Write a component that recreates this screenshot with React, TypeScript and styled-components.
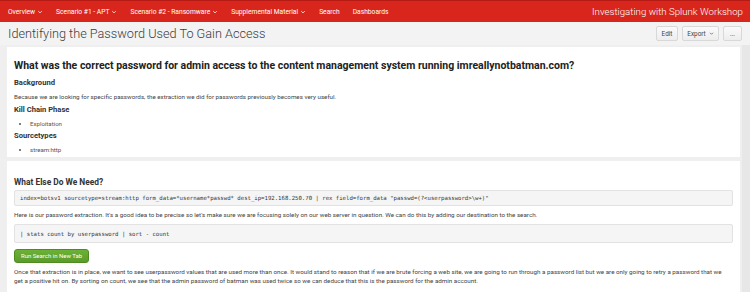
import styled, { createGlobalStyle } from 'styled-components';

const Global = createGlobalStyle`
  body {
    margin: 0;
    background: #eeeeee;
    font-family: Roboto, "Liberation Sans", sans-serif;
    color: #333;
  }
`;

const Page = styled.div`
  width: 750px;
  height: 292px;
  overflow: hidden;
  display: flex;
  flex-direction: column;
  background: #efefef;
`;

const TopBar = styled.div`
  height: 22px;
  flex-shrink: 0;
  background: #d8261c;
  border-top: 1px solid #b51a14;
  box-sizing: border-box;
  display: flex;
  align-items: center;
  padding: 0 7px 0 8px;
`;

const Nav = styled.nav`
  display: flex;
  align-items: center;
  gap: 13px;
  flex: 1;
`;

const NavItem = styled.span`
  color: #fff;
  font-size: 6.7px;
  display: flex;
  align-items: center;
  gap: 2px;
  white-space: nowrap;
`;

const AppTitle = styled.div`
  color: #fff;
  font-size: 9.7px;
  font-weight: 300;
  white-space: nowrap;
`;

const Header = styled.div`
  height: 23px;
  flex-shrink: 0;
  display: flex;
  align-items: center;
  justify-content: space-between;
  padding: 0 8px;
  background: #f3f3f3;
`;

const PageTitle = styled.h1`
  margin: 0;
  font-size: 12.7px;
  font-weight: 300;
  color: #3c3c3c;
  white-space: nowrap;
`;

const Actions = styled.div`
  display: flex;
  gap: 4px;
`;

const ActionButton = styled.button<{ $w: number }>`
  width: ${(p) => p.$w}px;
  height: 15px;
  padding: 0;
  border: 1px solid #d8d8d8;
  border-radius: 2px;
  background: linear-gradient(#fafafa, #ededed);
  color: #444;
  font-family: inherit;
  font-size: 6.4px;
  display: flex;
  align-items: center;
  justify-content: center;
  gap: 3px;
`;

const Body = styled.div`
  flex: 1;
  display: flex;
  min-height: 0;
`;

const Column = styled.div`
  flex: 1;
  display: flex;
  flex-direction: column;
  gap: 4px;
  padding: 2px 2px 0 7px;
`;

const Track = styled.div`
  width: 8px;
  flex-shrink: 0;
  background: #e7e7e7;
`;

const Panel = styled.section<{ $top: number; $bottom: number }>`
  background: #fff;
  padding: ${(p) => p.$top}px 7px ${(p) => p.$bottom}px 7px;
`;

const Question = styled.h2`
  margin: 5px 0 6px;
  font-size: 10.5px;
  line-height: 12px;
  font-weight: 700;
  color: #222;
  white-space: nowrap;
`;

const SubHead = styled.h3<{ $size?: number }>`
  margin: 0 0 3px;
  font-size: ${(p) => p.$size ?? 7.6}px;
  line-height: 10px;
  font-weight: 700;
  color: #333;
  white-space: nowrap;
`;

const Text = styled.p<{ $lh?: number; $mb?: number }>`
  margin: 0 0 ${(p) => p.$mb ?? 2}px;
  font-size: 6.25px;
  line-height: ${(p) => p.$lh ?? 12}px;
  color: #444;
  white-space: nowrap;
`;

const List = styled.ul`
  margin: 0 0 2px;
  padding-left: 16px;
  font-size: 6.1px;
  color: #555;
  li {
    line-height: 11px;
  }
`;

const Code = styled.pre<{ $h: number }>`
  margin: 0;
  height: ${(p) => p.$h}px;
  box-sizing: border-box;
  padding: 0 5px;
  display: flex;
  align-items: center;
  background: #f5f5f5;
  border: 1px solid #e2e2e2;
  border-radius: 2px;
  font-family: "DejaVu Sans Mono", "Liberation Mono", monospace;
  font-size: 5.65px;
  color: #333;
  white-space: nowrap;
`;

const RunButton = styled.button`
  height: 14px;
  padding: 0 6px;
  margin: 4px 0 5px;
  border: 1px solid #4f8b22;
  border-radius: 3px;
  background: linear-gradient(#6cb236, #5a9c2a);
  color: #fff;
  font-family: inherit;
  font-size: 6px;
`;

const Chevron = ({ size = 6 }: { size?: number }) => (
  <svg width={size} height={size} viewBox="0 0 10 10">
    <path d="M2 3.5 L5 6.5 L8 3.5" fill="none" stroke="currentColor" strokeWidth="1.3" />
  </svg>
);

const navItems = [
  { label: 'Overview', menu: true },
  { label: 'Scenario #1 - APT', menu: true },
  { label: 'Scenario #2 - Ransomware', menu: true },
  { label: 'Supplemental Material', menu: true },
  { label: 'Search', menu: false },
  { label: 'Dashboards', menu: false },
];

export default function App() {
  return (
    <Page>
      <Global />
      <TopBar>
        <Nav>
          {navItems.map((n) => (
            <NavItem key={n.label}>
              {n.label}
              {n.menu && <Chevron size={6} />}
            </NavItem>
          ))}
        </Nav>
        <AppTitle>Investigating with Splunk Workshop</AppTitle>
      </TopBar>

      <Header>
        <PageTitle>Identifying the Password Used To Gain Access</PageTitle>
        <Actions>
          <ActionButton $w={22}>Edit</ActionButton>
          <ActionButton $w={37}>
            Export <Chevron size={5} />
          </ActionButton>
          <ActionButton $w={19}>...</ActionButton>
        </Actions>
      </Header>

      <Body>
        <Column>
          <Panel $top={8} $bottom={0}>
            <Question>
              What was the correct password for admin access to the content management system running imreallynotbatman.com?
            </Question>
            <SubHead>Background</SubHead>
            <Text>
              Because we are looking for specific passwords, the extraction we did for passwords previously becomes very useful.
            </Text>
            <SubHead>Kill Chain Phase</SubHead>
            <List>
              <li>Exploitation</li>
            </List>
            <SubHead>Sourcetypes</SubHead>
            <List>
              <li>stream:http</li>
            </List>
          </Panel>

          <Panel $top={16} $bottom={5}>
            <SubHead $size={8.4}>What Else Do We Need?</SubHead>
            <Code $h={16}>
              index=botsv1 sourcetype=stream:http form_data=*username*passwd* dest_ip=192.168.250.70 | rex field=form_data "passwd=(?&lt;userpassword&gt;\w+)"
            </Code>
            <Text $lh={18} $mb={0}>
              Here is our password extraction. It's a good idea to be precise so let's make sure we are focusing solely on our web server in question. We can do this by adding our destination to the search.
            </Text>
            <Code $h={19}>| stats count by userpassword | sort - count</Code>
            <RunButton>Run Search in New Tab</RunButton>
            <Text $lh={9.5} $mb={1}>
              Once that extraction is in place, we want to see userpassword values that are used more than once. It would stand to reason that if we are brute forcing a web site, we are going to run through a password list but we are only going to retry a password that we
              <br />
              get a positive hit on. By sorting on count, we see that the admin password of batman was used twice so we can deduce that this is the password for the admin account.
            </Text>
          </Panel>
        </Column>
        <Track />
      </Body>
    </Page>
  );
}
